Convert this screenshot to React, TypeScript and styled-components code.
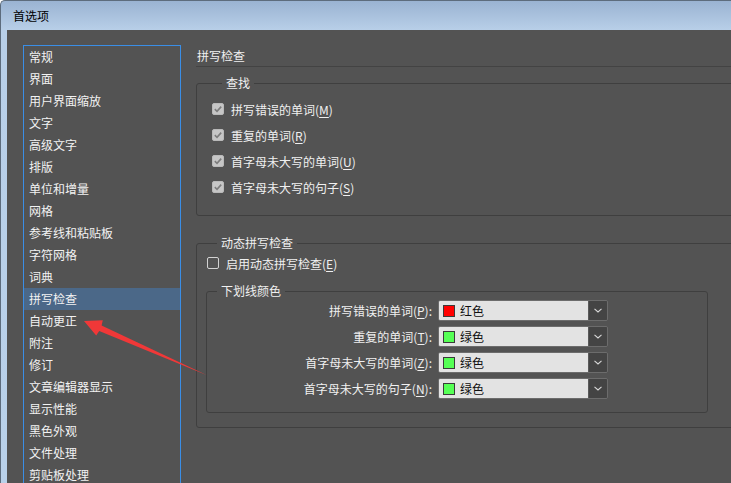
import React from 'react';
import styled, { createGlobalStyle } from 'styled-components';

const GlobalStyle = createGlobalStyle`
  html, body {
    margin: 0;
    padding: 0;
  }
  body {
    width: 731px;
    height: 483px;
    overflow: hidden;
    font-family: 'Microsoft YaHei', 'Noto Sans CJK SC', sans-serif;
    font-size: 12px;
  }
`;

const navItems = [
  '常规',
  '界面',
  '用户界面缩放',
  '文字',
  '高级文字',
  '排版',
  '单位和增量',
  '网格',
  '参考线和粘贴板',
  '字符网格',
  '词典',
  '拼写检查',
  '自动更正',
  '附注',
  '修订',
  '文章编辑器显示',
  '显示性能',
  '黑色外观',
  '文件处理',
  '剪贴板处理',
];

const findItems = [
  { label: '拼写错误的单词', key: 'M' },
  { label: '重复的单词', key: 'R' },
  { label: '首字母未大写的单词', key: 'U' },
  { label: '首字母未大写的句子', key: 'S' },
];

const colorRows = [
  { label: '拼写错误的单词', key: 'P', name: '红色', color: '#ff0000' },
  { label: '重复的单词', key: 'T', name: '绿色', color: '#55ff55' },
  { label: '首字母未大写的单词', key: 'Z', name: '绿色', color: '#55ff55' },
  { label: '首字母未大写的句子', key: 'N', name: '绿色', color: '#55ff55' },
];

const CheckMark = () => (
  <svg width="10" height="10" viewBox="0 0 10 10">
    <polyline points="1.8,5.2 4,7.3 8.2,2.6" fill="none" stroke="#7c7c7c" strokeWidth="1.6" />
  </svg>
);

const Chevron = () => (
  <svg width="8" height="5" viewBox="0 0 8 5">
    <polyline points="0.5,0.8 4,4 7.5,0.8" fill="none" stroke="#d8d8d8" strokeWidth="1.1" />
  </svg>
);

const App = () => {
  return (
    <>
      <GlobalStyle />
      <Window>
        <TitleBar>首选项</TitleBar>
        <Body>
          <Sidebar>
            {navItems.map((item) => (
              <NavItem key={item} $active={item === '拼写检查'}>
                {item}
              </NavItem>
            ))}
          </Sidebar>
          <Content>
            <PageTitle>拼写检查</PageTitle>
            <FindGroup>
              <GroupTitle>查找</GroupTitle>
              {findItems.map((item) => (
                <CheckRow key={item.key}>
                  <Box $checked>
                    <CheckMark />
                  </Box>
                  <span>
                    {item.label}(<Key>{item.key}</Key>)
                  </span>
                </CheckRow>
              ))}
            </FindGroup>
            <DynamicGroup>
              <GroupTitle>动态拼写检查</GroupTitle>
              <CheckRow $short>
                <Box />
                <span>
                  启用动态拼写检查(<Key>E</Key>)
                </span>
              </CheckRow>
              <ColorGroup>
                <GroupTitle>下划线颜色</GroupTitle>
                {colorRows.map((row) => (
                  <ColorRow key={row.key}>
                    <ColorLabel>
                      {row.label}(<Key>{row.key}</Key>):
                    </ColorLabel>
                    <Select>
                      <SelectValue>
                        <Swatch style={{ background: row.color }} />
                        {row.name}
                      </SelectValue>
                      <SelectButton>
                        <Chevron />
                      </SelectButton>
                    </Select>
                  </ColorRow>
                ))}
              </ColorGroup>
            </DynamicGroup>
          </Content>
        </Body>
        <Arrow width="135" height="70" viewBox="0 0 135 70">
          <polygon
            points="4,9 22.8,8.3 21.6,13.6 127,63.2 19.2,19.1 16.2,23.4"
            fill="#f03838"
          />
        </Arrow>
      </Window>
    </>
  );
};

export default App;

const Window = styled.div`
  position: relative;
  width: 731px;
  height: 483px;
  box-sizing: border-box;
  border-top: 1px solid #5d6c7d;
  border-left: 1px solid #5d6c7d;
  border-top-left-radius: 5px;
  background: linear-gradient(#9ab3d2, #b8cfe8 29px, #b9d1ea);
  display: flex;
  flex-direction: column;
  overflow: hidden;
`;

const TitleBar = styled.div`
  height: 29px;
  flex-shrink: 0;
  padding-left: 12px;
  display: flex;
  align-items: center;
  font-size: 12px;
  color: #000;
`;

const Body = styled.div`
  flex: 1;
  margin-left: 6px;
  background: #535353;
  display: flex;
  align-items: flex-start;
  padding: 15px 0 0 16px;
  overflow: hidden;
`;

const Sidebar = styled.div`
  width: 158px;
  flex-shrink: 0;
  box-sizing: border-box;
  border: 1px solid #3a8ee6;
  padding-bottom: 20px;
`;

const NavItem = styled.div<{ $active?: boolean }>`
  height: 22px;
  line-height: 22px;
  padding-left: 5px;
  color: #f2f2f2;
  background: ${(p) => (p.$active ? '#4b6888' : 'transparent')};
  white-space: nowrap;
`;

const Content = styled.div`
  width: 580px;
  flex-shrink: 0;
  margin-left: 15px;
  color: #f0f0f0;
`;

const PageTitle = styled.div`
  height: 21px;
  line-height: 21px;
  padding-left: 1px;
  border-bottom: 1px solid #434343;
`;

const Group = styled.fieldset`
  margin: 0;
  padding: 0;
  min-width: 0;
  border: 1px solid #3f3f3f;
  border-radius: 3px;
`;

const FindGroup = styled(Group)`
  margin-top: 7px;
  padding: 4px 0 15px 15px;
`;

const DynamicGroup = styled(Group)`
  margin-top: 18px;
  padding: 0 0 14px 10px;
`;

const ColorGroup = styled(Group)`
  margin-top: 8px;
  margin-left: -1px;
  width: 502px;
  box-sizing: border-box;
  padding: 0 0 13px 0;
  display: flex;
  flex-direction: column;
  gap: 5px;
`;

const GroupTitle = styled.legend`
  margin-left: 10px;
  padding: 0 4px;
  line-height: 18px;
  color: #f0f0f0;
`;

const CheckRow = styled.label<{ $short?: boolean }>`
  display: flex;
  align-items: center;
  gap: 7px;
  height: ${(p) => (p.$short ? '22px' : '26px')};
  white-space: nowrap;
`;

const Box = styled.span<{ $checked?: boolean }>`
  width: 12px;
  height: 12px;
  box-sizing: border-box;
  border-radius: 2px;
  border: 1px solid ${(p) => (p.$checked ? '#b9b9b9' : '#d2d2d2')};
  background: ${(p) => (p.$checked ? '#c6c6c6' : 'transparent')};
  display: flex;
  align-items: center;
  justify-content: center;
  flex-shrink: 0;
`;

const Key = styled.span`
  text-decoration: underline;
  text-underline-offset: 2px;
`;

const ColorRow = styled.div`
  display: grid;
  grid-template-columns: 225px 170px;
  column-gap: 6px;
  align-items: center;
  height: 21px;
`;

const ColorLabel = styled.div`
  text-align: right;
  white-space: nowrap;
`;

const Select = styled.div`
  display: flex;
  height: 21px;
  box-sizing: border-box;
  border: 1px solid #6c6c6c;
  border-radius: 2px;
  overflow: hidden;
`;

const SelectValue = styled.div`
  flex: 1;
  background: #e3e3e3;
  color: #111;
  display: flex;
  align-items: center;
  gap: 5px;
  padding-left: 4px;
`;

const Swatch = styled.span`
  width: 12px;
  height: 12px;
  box-sizing: border-box;
  border: 1px solid #3a3a3a;
`;

const SelectButton = styled.div`
  width: 18px;
  background: #444444;
  border-left: 1px solid #5a5a5a;
  display: flex;
  align-items: center;
  justify-content: center;
`;

const Arrow = styled.svg`
  position: absolute;
  left: 79px;
  top: 311px;
  pointer-events: none;
`;
